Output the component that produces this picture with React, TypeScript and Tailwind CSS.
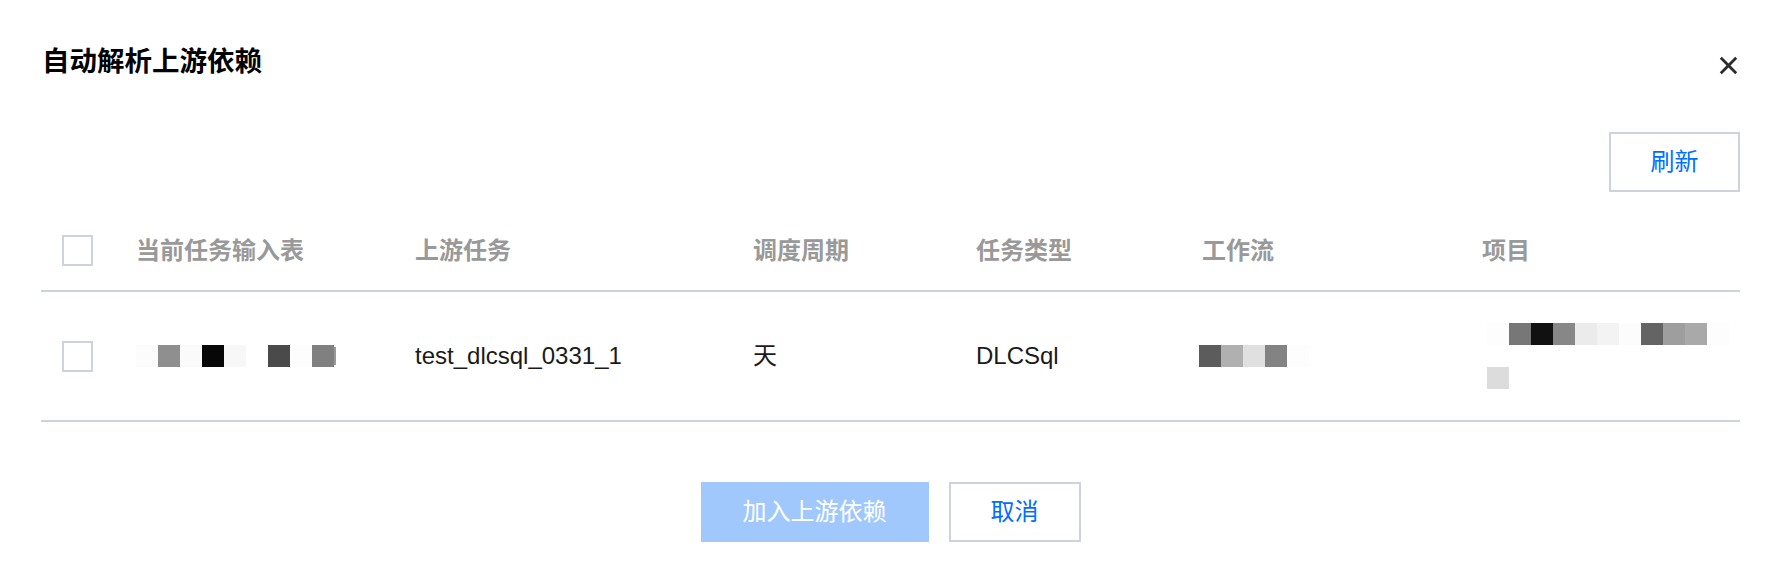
import React from "react";

const headers = ["当前任务输入表", "上游任务", "调度周期", "任务类型", "工作流", "项目"];

// mosaic blocks standing in for blurred values
const inputTableBlocks = [
  "bg-[#fcfcfc]",
  "bg-[#8f8f8f]",
  "bg-[#fafafa]",
  "bg-[#070707]",
  "bg-[#f7f7f7]",
  "bg-white",
  "bg-[#4a4a4a]",
  "bg-[#fdfdfd]",
  "bg-[#808080]",
];
const workflowBlocks = ["bg-[#5c5c5c]", "bg-[#b0b0b0]", "bg-[#e0e0e0]", "bg-[#838383]", "bg-[#fdfdfd]"];
const projectBlocks = [
  "bg-[#fdfdfd]",
  "bg-[#777777]",
  "bg-[#111111]",
  "bg-[#878787]",
  "bg-[#ebebeb]",
  "bg-[#f3f3f3]",
  "bg-[#fcfcfc]",
  "bg-[#646464]",
  "bg-[#9e9e9e]",
  "bg-[#a9a9a9]",
  "bg-[#fdfdfd]",
];

const Mosaic: React.FC<{ blocks: string[] }> = ({ blocks }) => (
  <div className="flex">
    {blocks.map((b, i) => (
      <div key={i} className={`w-[22px] h-[22px] ${b}`} />
    ))}
  </div>
);

const Checkbox: React.FC = () => (
  <div className="w-[31px] h-[31px] border-2 border-[#cdd3dd] bg-white" />
);

const cols = "grid grid-cols-[95px_279px_338px_223px_226px_280px_1fr]";

const App: React.FC = () => {
  return (
    <div className="w-[1770px] h-[572px] bg-white pl-[41px] pr-[30px] pt-[44px] font-['Liberation_Sans','Noto_Sans_CJK_SC',sans-serif] text-[#1a1a1a]">
      <div className="flex items-center justify-between">
        <h1 className="pl-[1px] text-[27.5px] leading-[36px] font-bold text-black">自动解析上游依赖</h1>
        <button className="mr-[2px] mt-[6px] w-[20px] h-[20px] flex items-center justify-center">
          <svg width="19" height="19" viewBox="0 0 19 19">
            <path d="M1.8 1.8 L17.2 17.2 M17.2 1.8 L1.8 17.2" stroke="#2b2b2b" strokeWidth="2.8" />
          </svg>
        </button>
      </div>

      <div className="flex justify-end mt-[52px]">
        <button className="w-[131px] h-[60px] border-2 border-[#cdd3dd] text-[24px] text-[#006eff] bg-white">
          刷新
        </button>
      </div>

      <div className="mt-[19px]">
        <div className={`${cols} items-center h-[81px] border-b-2 border-[#cdd3dd]`}>
          <div className="pl-[21px]">
            <Checkbox />
          </div>
          {headers.map((h) => (
            <div key={h} className="text-[24px] leading-[36px] font-semibold text-[#999999]">
              {h}
            </div>
          ))}
        </div>

        <div className={`${cols} items-center h-[130px] border-b-2 border-[#cdd3dd] text-[24px] leading-[36px]`}>
          <div className="pl-[21px]">
            <Checkbox />
          </div>
          <div className="flex items-center">
            <Mosaic blocks={inputTableBlocks} />
            <div className="w-[2px] h-[18px] bg-[#9a9a9a]" />
          </div>
          <div>test_dlcsql_0331_1</div>
          <div>天</div>
          <div>DLCSql</div>
          <div className="-ml-[3px]">
            <Mosaic blocks={workflowBlocks} />
          </div>
          <div className="flex flex-col gap-[22px] pl-[5px]">
            <Mosaic blocks={projectBlocks} />
            <Mosaic blocks={["bg-[#dcdcdc]"]} />
          </div>
        </div>
      </div>

      <div className="flex justify-center gap-[20px] mt-[60px]">
        <button className="w-[228px] h-[60px] bg-[#a0c8fc] text-white text-[24px]">加入上游依赖</button>
        <button className="w-[132px] h-[60px] border-2 border-[#cdd3dd] bg-white text-[24px] text-[#006eff]">
          取消
        </button>
      </div>
    </div>
  );
};

export default App;
